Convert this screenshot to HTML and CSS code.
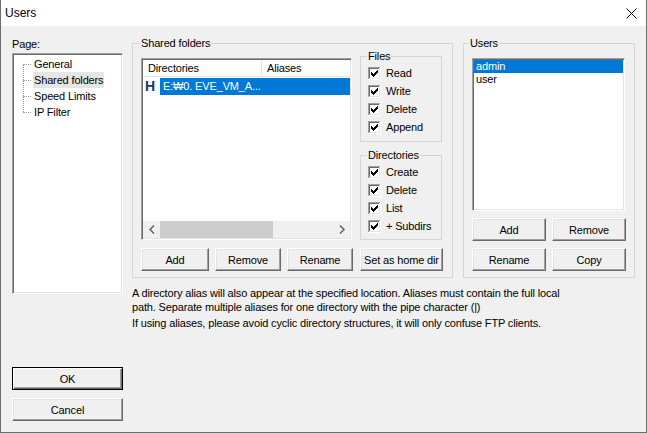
FILE: index.html
```html
<!DOCTYPE html>
<html>
<head>
<meta charset="utf-8">
<link rel="stylesheet" href="styles.css">
</head>
<body>
<svg class="defs" width="0" height="0">
  <defs>
    <symbol id="cb" viewBox="0 0 13 13">
      <rect x="0" y="0" width="13" height="13" fill="#fff"/>
      <rect x="0" y="0" width="12" height="1" fill="#a0a0a0"/>
      <rect x="0" y="0" width="1" height="12" fill="#a0a0a0"/>
      <rect x="1" y="1" width="10" height="1" fill="#696969"/>
      <rect x="1" y="1" width="1" height="10" fill="#696969"/>
      <rect x="1" y="11" width="11" height="1" fill="#e3e3e3"/>
      <rect x="11" y="1" width="1" height="11" fill="#e3e3e3"/>
      <rect x="3" y="5" width="1" height="3" fill="#000"/>
      <rect x="4" y="6" width="1" height="3" fill="#000"/>
      <rect x="5" y="7" width="1" height="3" fill="#000"/>
      <rect x="6" y="6" width="1" height="3" fill="#000"/>
      <rect x="7" y="5" width="1" height="3" fill="#000"/>
      <rect x="8" y="4" width="1" height="3" fill="#000"/>
      <rect x="9" y="3" width="1" height="3" fill="#000"/>
    </symbol>
  </defs>
</svg>
<div class="window">
  <div class="titlebar">
    <span class="title">Users</span>
    <svg class="close" width="11" height="11" viewBox="0 0 11 11"><path d="M0.5 0.5L10.5 10.5M10.5 0.5L0.5 10.5" stroke="#000" stroke-width="1" fill="none"/></svg>
  </div>
  <div class="body">
    <div class="leftcol">
      <div class="page-label">Page:</div>
      <div class="tree sunken">
        <ul class="tree-items">
          <li><span>General</span></li>
          <li class="sel"><span>Shared folders</span></li>
          <li><span>Speed Limits</span></li>
          <li><span>IP Filter</span></li>
        </ul>
      </div>
      <button class="btn default ok">OK</button>
      <button class="btn cancel">Cancel</button>
    </div>
    <div class="main">
      <div class="top-row">
        <div class="group shared">
          <div class="glabel">Shared folders</div>
          <div class="shared-row">
            <div class="dirlist sunken">
              <div class="lv-header">
                <div class="lv-col c1">Directories</div>
                <div class="lv-col c2">Aliases</div>
              </div>
              <div class="lv-row">
                <span class="home">H</span>
                <span class="lv-sel">E:₩0. EVE_VM_A...</span>
              </div>
              <div class="hscroll">
                <div class="arrow"><svg width="6" height="9" viewBox="0 0 6 9"><path d="M5 0.5L1 4.5L5 8.5" stroke="#606060" stroke-width="1.5" fill="none"/></svg></div>
                <div class="thumb"></div>
                <div class="track"></div>
                <div class="arrow"><svg width="6" height="9" viewBox="0 0 6 9"><path d="M1 0.5L5 4.5L1 8.5" stroke="#606060" stroke-width="1.5" fill="none"/></svg></div>
              </div>
            </div>
            <div class="perm-col">
              <div class="group perm files">
                <div class="glabel small">Files</div>
                <div class="cb-list">
                  <div class="cbrow"><svg class="cb"><use href="#cb"/></svg><span>Read</span></div>
                  <div class="cbrow"><svg class="cb"><use href="#cb"/></svg><span>Write</span></div>
                  <div class="cbrow"><svg class="cb"><use href="#cb"/></svg><span>Delete</span></div>
                  <div class="cbrow"><svg class="cb"><use href="#cb"/></svg><span>Append</span></div>
                </div>
              </div>
              <div class="group perm dirs">
                <div class="glabel small">Directories</div>
                <div class="cb-list">
                  <div class="cbrow"><svg class="cb"><use href="#cb"/></svg><span>Create</span></div>
                  <div class="cbrow"><svg class="cb"><use href="#cb"/></svg><span>Delete</span></div>
                  <div class="cbrow"><svg class="cb"><use href="#cb"/></svg><span>List</span></div>
                  <div class="cbrow"><svg class="cb"><use href="#cb"/></svg><span>+ Subdirs</span></div>
                </div>
              </div>
            </div>
          </div>
          <div class="btn-row">
            <button class="btn b-add">Add</button>
            <button class="btn b-remove">Remove</button>
            <button class="btn b-rename">Rename</button>
            <button class="btn b-home">Set as home dir</button>
          </div>
        </div>
        <div class="group users">
          <div class="glabel ulabel">Users</div>
          <div class="userlist sunken">
            <div class="u-row u-sel">admin</div>
            <div class="u-row">user</div>
          </div>
          <div class="ubtn-row first">
            <button class="btn ubtn">Add</button>
            <button class="btn ubtn">Remove</button>
          </div>
          <div class="ubtn-row">
            <button class="btn ubtn">Rename</button>
            <button class="btn ubtn">Copy</button>
          </div>
        </div>
      </div>
      <div class="notes">
        <p>A directory alias will also appear at the specified location. Aliases must contain the full local<br>path. Separate multiple aliases for one directory with the pipe character (|)</p>
        <p>If using aliases, please avoid cyclic directory structures, it will only confuse FTP clients.</p>
      </div>
    </div>
  </div>
</div>
</body>
</html>
```
FILE: styles.css
```css
* { box-sizing: border-box; }
html, body { margin: 0; padding: 0; }
body {
  font-family: "Liberation Sans", Arial, sans-serif;
  font-size: 11px;
  letter-spacing: -0.15px;
  color: #000;
  background: #fff;
}
.defs { position: absolute; width: 0; height: 0; overflow: hidden; }

.window {
  width: 647px;
  height: 433px;
  border: 1px solid #6d6d6d;
  border-top: none;
  background: #f0f0f0;
  display: flex;
  flex-direction: column;
}
.titlebar {
  height: 26px;
  flex-shrink: 0;
  background: #fff;
  display: flex;
  align-items: center;
  justify-content: space-between;
  padding: 0 9px 0 4px;
}
.title { font-size: 12px; line-height: 14px; letter-spacing: 0; }
.close { display: block; }

.body {
  flex: 1;
  display: flex;
  align-items: flex-start;
  padding: 12px 0 0 11px;
}

/* sunken 3D border */
.sunken {
  border: 1px solid;
  border-color: #a0a0a0 #fff #fff #a0a0a0;
  padding: 1px;
  box-shadow: inset 1px 1px #696969, inset -1px -1px #e3e3e3;
  background: #fff;
}

/* left column */
.leftcol {
  width: 111px;
  display: flex;
  flex-direction: column;
}
.page-label { height: 13px; line-height: 13px; }
.tree {
  margin-top: 2px;
  height: 241px;
  padding-top: 2px;
}
.tree-items { list-style: none; margin: 0; padding: 0; }
.tree-items li {
  position: relative;
  height: 16px;
  line-height: 16px;
  padding-left: 19px;
}
.tree-items li span { display: inline-block; padding: 0 1px; height: 16px; }
.tree-items li.sel span { background: #e5e5e5; }
.tree-items li::before {
  content: "";
  position: absolute;
  left: 9px;
  top: 8px;
  width: 8px;
  border-top: 1px dotted #a0a0a0;
}
.tree-items li:not(:last-child)::after {
  content: "";
  position: absolute;
  left: 9px;
  top: 8px;
  height: 16px;
  border-left: 1px dotted #a0a0a0;
}

/* buttons */
.btn {
  font-family: inherit;
  font-size: 11px;
  letter-spacing: -0.15px;
  color: #000;
  height: 23px;
  padding: 0;
  margin: 0;
  background: #f0f0f0;
  border: 1px solid;
  border-color: #fff #696969 #696969 #fff;
  box-shadow: inset -1px -1px #a0a0a0, inset 1px 1px #e3e3e3;
  border-radius: 0;
  text-align: center;
}
.btn.default {
  border: 1px solid #000;
  box-shadow: inset 1px 1px #fff, inset -1px -1px #696969, inset -2px -2px #a0a0a0;
}
.ok { margin-top: 73px; width: 111px; }
.cancel { margin-top: 8px; width: 111px; }

/* main */
.main { margin-left: 9px; }
.top-row { display: flex; margin-top: 5px; align-items: flex-start; }
.group { border: 1px solid #d5d5d5; }
.glabel {
  display: block;
  width: fit-content;
  margin: -7px 0 0 7px;
  padding: 0 1px;
  height: 13px;
  line-height: 13px;
  background: #f0f0f0;
}
.glabel.small { margin-left: 6px; }
.glabel.ulabel { margin-left: 5px; }

.shared { width: 321px; height: 235px; }
.shared-row {
  display: flex;
  margin-top: 6px;
  padding-left: 8px;
  align-items: flex-start;
}
.dirlist {
  margin-top: 2px;
  width: 211px;
  height: 182px;
  display: flex;
  flex-direction: column;
}
.lv-header { display: flex; height: 17px; background: #fff; }
.lv-col {
  height: 17px;
  line-height: 16px;
  padding-left: 5px;
  border-bottom: 1px solid #e5e5e5;
}
.lv-col.c1 { width: 119px; border-right: 1px solid #e5e5e5; }
.lv-col.c2 { flex: 1; }
.lv-row {
  margin-top: 1px;
  height: 17px;
  display: flex;
  align-items: center;
}
.home {
  width: 17px;
  padding-left: 2px;
  font-weight: bold;
  font-size: 14px;
  color: #0e3a67;
  line-height: 17px;
}
.lv-sel {
  flex: 1;
  height: 17px;
  line-height: 17px;
  padding-left: 3px;
  background: #0078d7;
  color: #fff;
}
.hscroll {
  margin-top: auto;
  height: 17px;
  display: flex;
  background: #f0f0f0;
}
.hscroll .arrow {
  width: 17px;
  display: flex;
  align-items: center;
  justify-content: center;
}
.hscroll .thumb { width: 113px; background: #cdcdcd; }
.hscroll .track { flex: 1; }

.perm-col { margin-left: 8px; width: 82px; }
.perm.files { height: 86px; }
.perm.dirs { height: 85px; margin-top: 13px; }
.cb-list { margin-top: 1px; }
.cbrow {
  height: 18px;
  display: flex;
  align-items: center;
  padding-left: 7px;
}
.cb { width: 13px; height: 13px; flex-shrink: 0; }
.cbrow span { margin-left: 5px; }

.btn-row {
  display: flex;
  margin-top: 8px;
  padding-left: 8px;
}
.b-add { width: 68px; }
.b-remove { width: 66px; margin-left: 6px; }
.b-rename { width: 66px; margin-left: 6px; }
.b-home { width: 83px; margin-left: 7px; }

.users { width: 172px; height: 235px; margin-left: 10px; }
.userlist {
  margin: 8px 0 0 8px;
  width: 153px;
  height: 153px;
}
.u-row { height: 13px; line-height: 13px; padding-left: 2px; }
.u-sel { background: #0078d7; color: #fff; }
.ubtn-row { display: flex; padding-left: 8px; margin-top: 7px; }
.ubtn-row.first { margin-top: 7px; }
.ubtn { width: 74px; }
.ubtn + .ubtn { margin-left: 6px; }

.notes { margin-top: 8px; }
.notes p { margin: 0; line-height: 14px; }
.notes p + p { margin-top: 2px; }
```
